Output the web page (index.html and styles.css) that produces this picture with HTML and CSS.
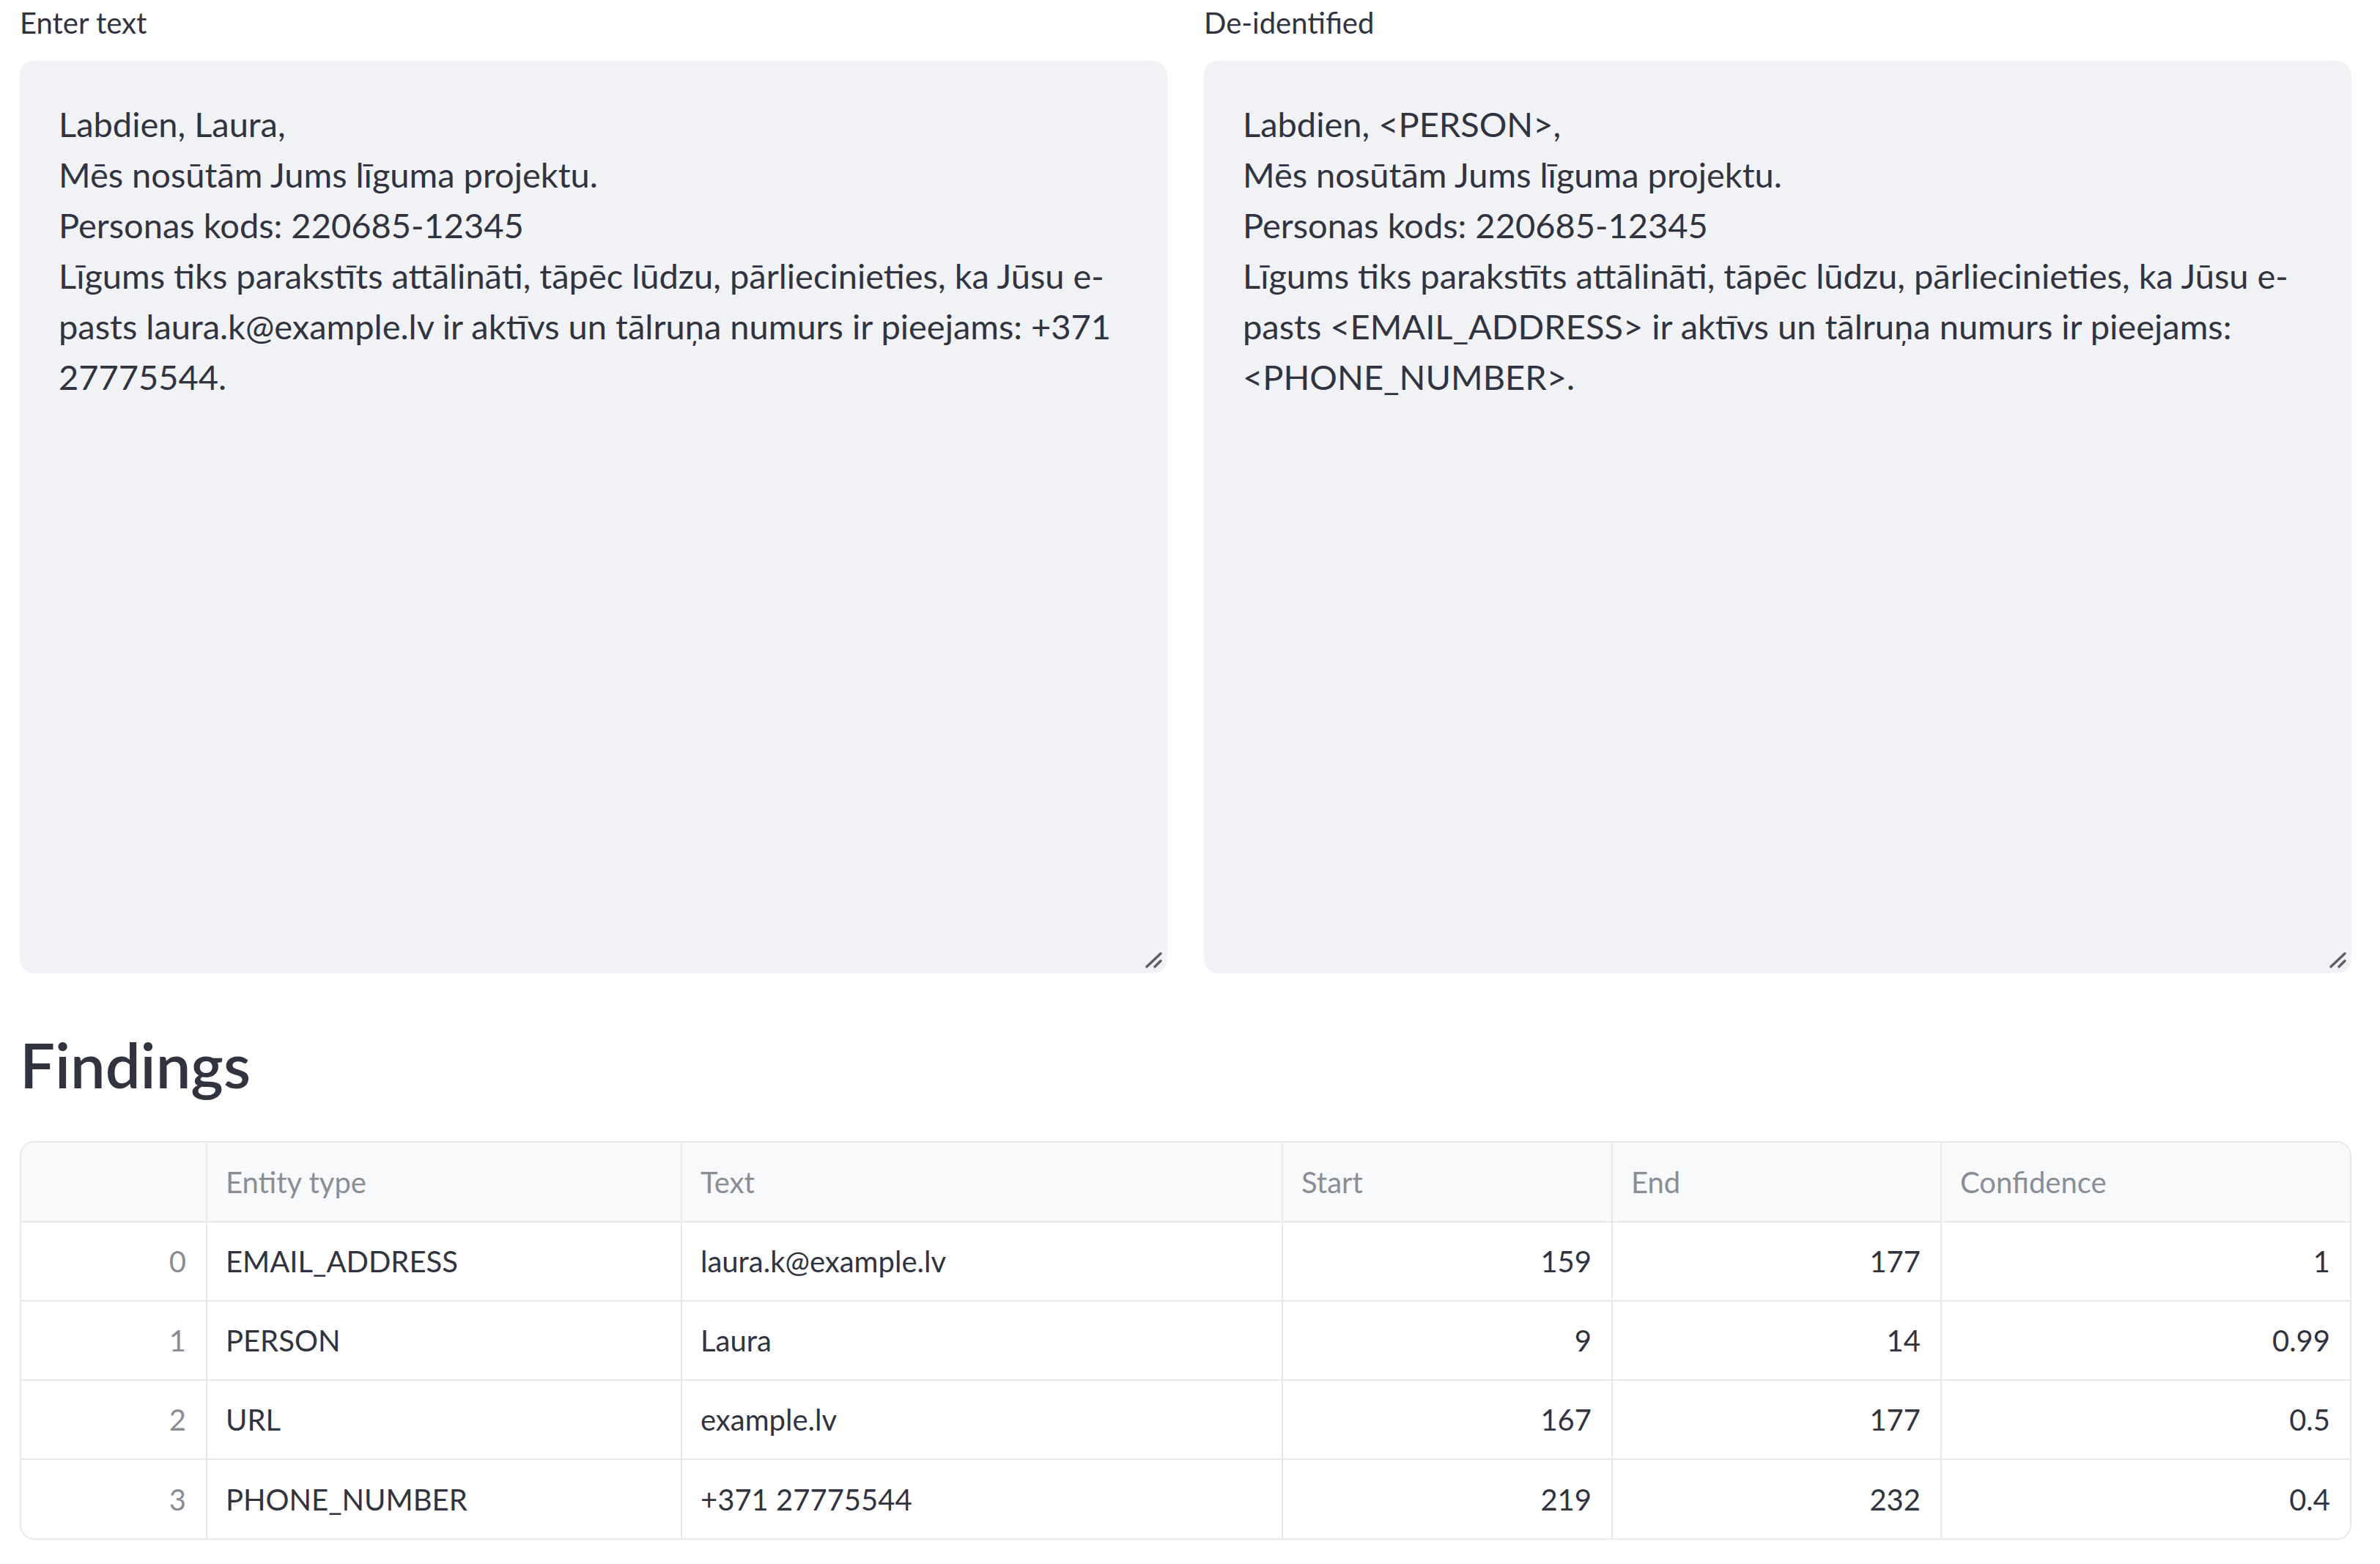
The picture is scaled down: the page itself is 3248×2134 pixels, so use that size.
FILE: index.html
```html
<!DOCTYPE html>
<html lang="lv">
<head>
    <meta charset="UTF-8">
    <title>De-identification</title>
    <link rel="stylesheet" href="styles.css">
</head>
<body>
    <div class="page">
        <div class="columns">
            <div class="field">
                <label class="field-label" for="source">Enter text</label>
                <div class="area-wrap">
                    <textarea id="source" class="text-area" spellcheck="false">
Labdien, Laura,
Mēs nosūtām Jums līguma projektu.
Personas kods: 220685-12345
Līgums tiks parakstīts attālināti, tāpēc lūdzu, pārliecinieties, ka Jūsu e-
pasts laura.k@example.lv ir aktīvs un tālruņa numurs ir pieejams: +371
27775544.</textarea>
                    <svg class="grip" width="24" height="24" viewBox="0 0 24 24">
                        <path d="M2 21 L21 3 M13 21 L21 13"/>
                    </svg>
                </div>
            </div>
            <div class="field">
                <label class="field-label" for="result">De-identified</label>
                <div class="area-wrap">
                    <textarea id="result" class="text-area" spellcheck="false">
Labdien, &lt;PERSON&gt;,
Mēs nosūtām Jums līguma projektu.
Personas kods: 220685-12345
Līgums tiks parakstīts attālināti, tāpēc lūdzu, pārliecinieties, ka Jūsu e-
pasts &lt;EMAIL_ADDRESS&gt; ir aktīvs un tālruņa numurs ir pieejams:
&lt;PHONE_NUMBER&gt;.</textarea>
                    <svg class="grip" width="24" height="24" viewBox="0 0 24 24">
                        <path d="M2 21 L21 3 M13 21 L21 13"/>
                    </svg>
                </div>
            </div>
        </div>

        <h2 class="section-title">Findings</h2>

        <div class="frame">
            <table class="findings">
                <colgroup>
                    <col class="c-index">
                    <col class="c-type">
                    <col class="c-text">
                    <col class="c-start">
                    <col class="c-end">
                    <col class="c-conf">
                </colgroup>
                <thead>
                    <tr>
                        <th></th>
                        <th>Entity type</th>
                        <th>Text</th>
                        <th>Start</th>
                        <th>End</th>
                        <th>Confidence</th>
                    </tr>
                </thead>
                <tbody>
                    <tr>
                        <td class="idx">0</td>
                        <td>EMAIL_ADDRESS</td>
                        <td>laura.k@example.lv</td>
                        <td class="num">159</td>
                        <td class="num">177</td>
                        <td class="num">1</td>
                    </tr>
                    <tr>
                        <td class="idx">1</td>
                        <td>PERSON</td>
                        <td>Laura</td>
                        <td class="num">9</td>
                        <td class="num">14</td>
                        <td class="num">0.99</td>
                    </tr>
                    <tr>
                        <td class="idx">2</td>
                        <td>URL</td>
                        <td>example.lv</td>
                        <td class="num">167</td>
                        <td class="num">177</td>
                        <td class="num">0.5</td>
                    </tr>
                    <tr>
                        <td class="idx">3</td>
                        <td>PHONE_NUMBER</td>
                        <td>+371 27775544</td>
                        <td class="num">219</td>
                        <td class="num">232</td>
                        <td class="num">0.4</td>
                    </tr>
                </tbody>
            </table>
        </div>
    </div>
</body>
</html>
```

FILE: styles.css
```css
:root {
    --text: #31333f;
    --muted: #8b8d95;
    --field-bg: #f0f2f6;
    --line: #e8e9ed;
    --head-bg: #f8f9fb;
}

* {
    margin: 0;
    padding: 0;
    box-sizing: border-box;
}

body {
    background: #ffffff;
    color: var(--text);
    font-family: Lato, "Source Sans Pro", "Liberation Sans", sans-serif;
}

.page {
    padding: 0 39px 0 27px;
}

.columns {
    display: grid;
    grid-template-columns: 1fr 1fr;
    gap: 50px;
}

.field-label {
    display: block;
    font-size: 40px;
    line-height: 62px;
    margin-bottom: 21px;
    color: var(--text);
}

.area-wrap {
    position: relative;
}

.text-area {
    display: block;
    width: 100%;
    height: 1245px;
    padding: 52px 30px 52px 53px;
    border: none;
    border-radius: 20px;
    background: var(--field-bg);
    color: var(--text);
    font-family: inherit;
    font-size: 47px;
    line-height: 69px;
    white-space: pre;
    overflow: hidden;
    resize: none;
    outline: none;
}

/* resize handle drawn over the corner */
.grip {
    position: absolute;
    right: 6px;
    bottom: 6px;
    fill: none;
    stroke: #5f6066;
    stroke-width: 3.5;
    stroke-linecap: round;
}

.section-title {
    font-size: 85px;
    font-weight: 600;
    line-height: 1.2;
    margin: 73px 0 54px;
    color: var(--text);
}

.frame {
    border: 2px solid var(--line);
    border-radius: 20px;
    overflow: hidden;
}

.findings {
    width: 100%;
    border-collapse: collapse;
    table-layout: fixed;
    font-size: 40px;
}

.c-index { width: 253px; }
.c-type { width: 648px; }
.c-text { width: 820px; }
.c-start { width: 450px; }
.c-end { width: 449px; }
.c-conf { width: 558px; }

.findings th,
.findings td {
    height: 108px;
    padding: 0 27px 0 25px;
    text-align: left;
    vertical-align: middle;
    border-right: 2px solid var(--line);
    border-bottom: 2px solid var(--line);
    white-space: nowrap;
}

.findings th:last-child,
.findings td:last-child {
    border-right: none;
}

.findings tbody tr:last-child td {
    border-bottom: none;
}

.findings th {
    background: var(--head-bg);
    font-weight: 400;
    color: var(--muted);
}

.findings td.idx {
    text-align: right;
    color: var(--muted);
}

.findings td.num {
    text-align: right;
}
```
